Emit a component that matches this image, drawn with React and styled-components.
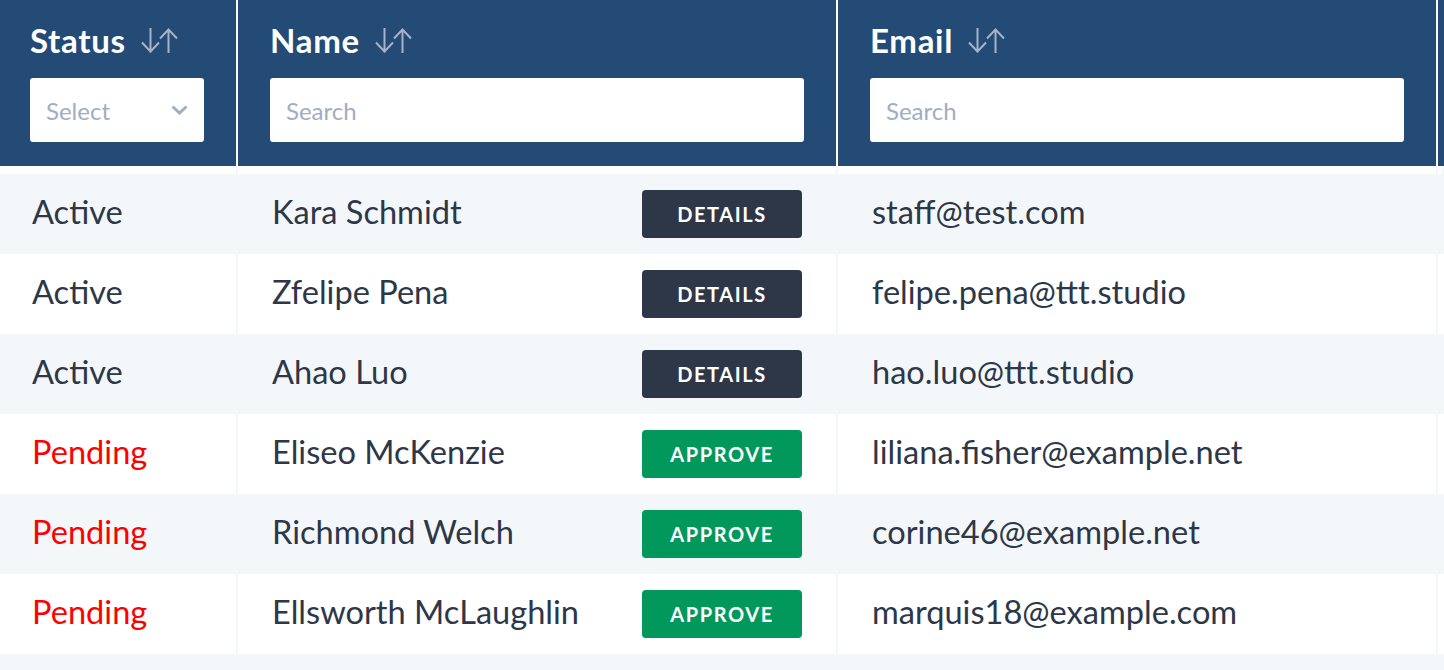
import styled, { createGlobalStyle } from 'styled-components';

const COLORS = {
  HEADER: '#244a76',
  STRIPE: '#f4f7fa',
  TEXT: '#2d3748',
  MUTED: '#a0aec0',
  RED: '#ff0000',
  DARK: '#2d3748',
  GREEN: '#02985c',
  WHITE: '#ffffff',
};

const users = [
  { status: 'Active', name: 'Kara Schmidt', email: 'staff@test.com' },
  { status: 'Active', name: 'Zfelipe Pena', email: 'felipe.pena@ttt.studio' },
  { status: 'Active', name: 'Ahao Luo', email: 'hao.luo@ttt.studio' },
  { status: 'Pending', name: 'Eliseo McKenzie', email: 'liliana.fisher@example.net' },
  { status: 'Pending', name: 'Richmond Welch', email: 'corine46@example.net' },
  { status: 'Pending', name: 'Ellsworth McLaughlin', email: 'marquis18@example.com' },
  { status: '', name: '', email: '' },
];

const SortIcon = () => (
  <SortSvg width="38" height="27" viewBox="0 0 38 27" fill="none">
    <path d="M10.5 1v24.5M2 15.5l8.5 9 8.5-9" />
    <path d="M28.5 26V2M20 11.5l8.5-9 8.5 9" />
  </SortSvg>
);

const Chevron = () => (
  <svg width="17" height="10" viewBox="0 0 17 10" fill="none">
    <path d="M1.5 1.5l7 6.5 7-6.5" stroke={COLORS.MUTED} strokeWidth="3" />
  </svg>
);

const App = () => {
  return (
    <>
      <GlobalStyle />
      <Table>
        <HeadRow>
          <HeadCell $first>
            <Title>
              Status <SortIcon />
            </Title>
            <SelectBox>
              <Placeholder>Select</Placeholder>
              <Chevron />
            </SelectBox>
          </HeadCell>
          <HeadCell>
            <Title>
              Name <SortIcon />
            </Title>
            <SearchInput placeholder="Search" />
          </HeadCell>
          <HeadCell>
            <Title>
              Email <SortIcon />
            </Title>
            <SearchInput placeholder="Search" />
          </HeadCell>
          <HeadCell />
        </HeadRow>
        <Spacer>
          <SpacerCell />
          <SpacerCell />
          <SpacerCell />
          <SpacerCell />
        </Spacer>
        {users.map((u, i) => (
          <Row key={i} $striped={i % 2 === 0}>
            <Cell $first>
              <StatusText $pending={u.status === 'Pending'}>{u.status}</StatusText>
            </Cell>
            <Cell>
              <NameWrap>
                <span>{u.name}</span>
                {u.name && (
                  <ActionButton $approve={u.status === 'Pending'}>
                    {u.status === 'Pending' ? 'APPROVE' : 'DETAILS'}
                  </ActionButton>
                )}
              </NameWrap>
            </Cell>
            <Cell>{u.email}</Cell>
            <Cell />
          </Row>
        ))}
      </Table>
    </>
  );
};

export default App;

const GlobalStyle = createGlobalStyle`
  html, body {
    margin: 0;
    padding: 0;
    background: ${COLORS.WHITE};
    overflow: hidden;
  }
  body {
    font-family: Lato, "Noto Sans", sans-serif;
    color: ${COLORS.TEXT};
  }
`;

const Table = styled.div`
  width: 1444px;
  display: flex;
  flex-direction: column;
`;

const HeadRow = styled.div`
  display: grid;
  grid-template-columns: 238px 600px 600px 1fr;
  height: 166px;
`;

const HeadCell = styled.div`
  display: flex;
  flex-direction: column;
  padding: 20px 32px 24px ${(p) => (p.$first ? '30px' : '32px')};
  background: ${COLORS.HEADER};
  border-right: 2px solid ${COLORS.WHITE};
`;

const Title = styled.div`
  display: flex;
  align-items: center;
  gap: 14px;
  height: 40px;
  margin-bottom: 18px;

  color: ${COLORS.WHITE};
  font-size: 33px;
  font-weight: 700;
  letter-spacing: 0.7px;
  line-height: 40px;
`;

const SortSvg = styled.svg`
  stroke: #a6b3c7;
  stroke-width: 2;
`;

const SelectBox = styled.div`
  display: flex;
  align-items: center;
  justify-content: space-between;
  height: 64px;
  padding: 0 16px;
  border-radius: 3px;
  background: ${COLORS.WHITE};
`;

const Placeholder = styled.span`
  color: ${COLORS.MUTED};
  font-size: 24px;
`;

const SearchInput = styled.input`
  height: 64px;
  box-sizing: border-box;
  width: 100%;
  padding: 0 16px;
  border: none;
  border-radius: 3px;
  outline: none;
  background: ${COLORS.WHITE};
  font-family: Lato, "Noto Sans", sans-serif;
  font-size: 24px;

  &::placeholder {
    color: ${COLORS.MUTED};
  }
`;

const Spacer = styled.div`
  display: grid;
  grid-template-columns: 238px 600px 600px 1fr;
  height: 8px;
`;

const SpacerCell = styled.div`
  border-right: 2px solid ${COLORS.STRIPE};
`;

const Row = styled.div`
  display: grid;
  grid-template-columns: 238px 600px 600px 1fr;
  height: 80px;
  background: ${(p) => (p.$striped ? COLORS.STRIPE : COLORS.WHITE)};
`;

const Cell = styled.div`
  display: flex;
  align-items: center;
  padding: 0 34px 4px ${(p) => (p.$first ? '32px' : '34px')};
  border-right: 2px solid ${COLORS.STRIPE};

  font-size: 32.6px;
  line-height: 40px;
  color: ${COLORS.TEXT};
  white-space: nowrap;
`;

const StatusText = styled.span`
  color: ${(p) => (p.$pending ? COLORS.RED : COLORS.TEXT)};
`;

const NameWrap = styled.div`
  display: flex;
  align-items: center;
  justify-content: space-between;
  width: 100%;
`;

const ActionButton = styled.button`
  width: 160px;
  height: 48px;
  margin-top: 4px;
  border: none;
  border-radius: 4px;
  background: ${(p) => (p.$approve ? COLORS.GREEN : COLORS.DARK)};
  cursor: pointer;

  color: ${COLORS.WHITE};
  font-family: Lato, "Noto Sans", sans-serif;
  font-size: 20px;
  font-weight: 700;
  letter-spacing: 1.6px;
`;
